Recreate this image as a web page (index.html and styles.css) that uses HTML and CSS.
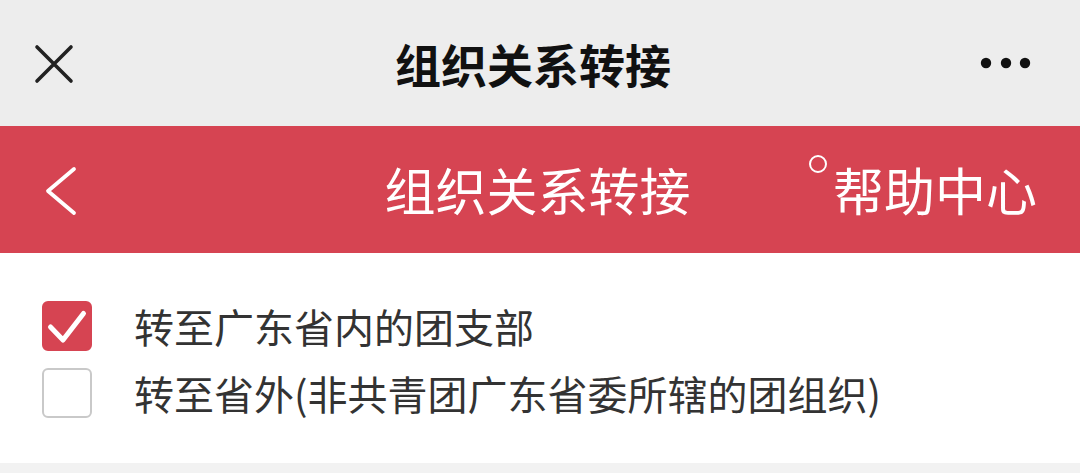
FILE: index.html
```html
<!DOCTYPE html>
<html lang="zh-CN">
<head>
<meta charset="utf-8">
<title>组织关系转接</title>
<link rel="stylesheet" href="styles.css">
</head>
<body>
<div class="page">
  <header class="topbar">
    <div class="tb-left">
      <svg class="icon-close" width="40" height="40" viewBox="0 0 40 40"><path d="M3 3 L37 37 M37 3 L3 37" stroke="#222" stroke-width="3.6" stroke-linecap="round" fill="none"/></svg>
    </div>
    <div class="tb-title">组织关系转接</div>
    <div class="tb-right">
      <svg class="icon-more" width="52" height="14" viewBox="0 0 52 14"><circle cx="6" cy="7" r="5.2" fill="#111"/><circle cx="26" cy="7" r="5.2" fill="#111"/><circle cx="45" cy="7" r="5.2" fill="#111"/></svg>
    </div>
  </header>
  <nav class="navbar">
    <div class="nb-left">
      <svg class="icon-back" width="36" height="50" viewBox="0 0 36 50"><path d="M30 3 L4 25 L30 47" stroke="#fff" stroke-width="3.8" stroke-linecap="round" stroke-linejoin="round" fill="none"/></svg>
    </div>
    <div class="nb-title">组织关系转接</div>
    <div class="nb-right">
      <span class="help"><span class="help-dot"></span>帮助中心</span>
    </div>
  </nav>
  <main class="content">
    <label class="option">
      <span class="box box-checked">
        <svg width="50" height="50" viewBox="0 0 50 50"><path d="M8.5 26 L21 39 L41.5 12.5" stroke="#fff" stroke-width="5" stroke-linecap="round" stroke-linejoin="round" fill="none"/></svg>
      </span>
      <span class="option-text">转至广东省内的团支部</span>
    </label>
    <label class="option">
      <span class="box"></span>
      <span class="option-text">转至省外(非共青团广东省委所辖的团组织)</span>
    </label>
  </main>
  <div class="footer-band"></div>
</div>
</body>
</html>
```
FILE: styles.css
```css
* { box-sizing: border-box; }
html, body { margin: 0; padding: 0; }
body {
  font-family: "Noto Sans CJK SC", "Noto Sans", sans-serif;
  background: #f2f2f2;
  width: 1080px;
  height: 473px;
  overflow: hidden;
}
.page { display: flex; flex-direction: column; }

.topbar {
  height: 126px;
  background: #ededed;
  display: grid;
  grid-template-columns: 1fr auto 1fr;
  align-items: center;
  padding: 0 48px 0 34px;
}
.tb-left { display: flex; align-items: center; }
.icon-close { display: block; margin-top: 2px; }
.tb-title {
  font-size: 46px;
  font-weight: 700;
  color: #111;
  line-height: 1;
}
.tb-right { display: flex; justify-content: flex-end; }
.icon-more { display: block; }

.navbar {
  height: 127px;
  background: #d64452;
  display: grid;
  grid-template-columns: 1fr auto 1fr;
  align-items: center;
  padding: 0 43px 0 44px;
  color: #fff;
}
.nb-left { display: flex; align-items: center; }
.icon-back { display: block; margin-top: 2px; }
.nb-title {
  font-size: 51px;
  line-height: 1;
  font-weight: 400;
  margin-right: 6px;
}
.nb-right { display: flex; justify-content: flex-end; }
.help {
  font-size: 51px;
  line-height: 1;
  display: flex;
  align-items: flex-start;
}
.help-dot {
  width: 18px;
  height: 18px;
  border: 2px solid #fff;
  border-radius: 50%;
  margin-top: -9px;
  margin-right: 6px;
}

.content {
  background: #fff;
  height: 210px;
  padding: 39px 0 0 42px;
  display: flex;
  flex-direction: column;
}
.option {
  height: 67px;
  display: flex;
  align-items: center;
  gap: 42px;
}
.box {
  width: 50px;
  height: 50px;
  border-radius: 6px;
  border: 2px solid #c9c9c9;
  background: #fff;
  flex: none;
  position: relative;
}
.box-checked {
  background: #d64452;
  border-color: #d64452;
}
.box-checked svg { position: absolute; left: -2px; top: -2px; }
.option-text {
  font-size: 40px;
  color: #333;
  line-height: 1;
}
.footer-band { height: 10px; background: #f2f2f2; }
```
